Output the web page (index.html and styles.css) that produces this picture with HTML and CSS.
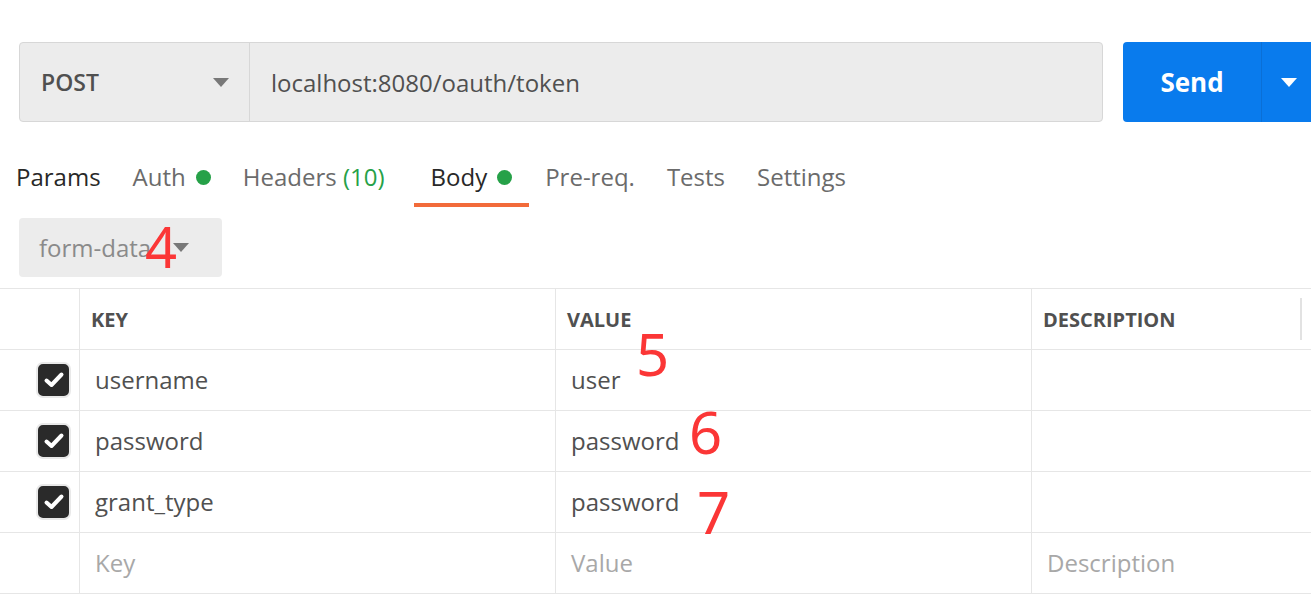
FILE: index.html
```html
<!DOCTYPE html>
<html lang="en">
<head>
<meta charset="utf-8">
<title>POST localhost:8080/oauth/token</title>
<link rel="stylesheet" href="styles.css">
</head>
<body>
<div class="page">
  <div class="request-bar">
    <div class="url-group">
      <div class="method">
        <span class="method-name">POST</span>
        <span class="caret caret-grey"></span>
      </div>
      <div class="url">localhost:8080/oauth/token</div>
    </div>
    <div class="send">
      <span class="send-label">Send</span>
      <span class="send-more"><span class="caret caret-white"></span></span>
    </div>
  </div>

  <nav class="tabs">
    <span class="tab tab-dark">Params</span>
    <span class="tab">Auth<span class="dot"></span></span>
    <span class="tab tab-headers">Headers <span class="count">(10)</span></span>
    <span class="tab tab-dark active">Body<span class="dot"></span></span>
    <span class="tab">Pre-req.</span>
    <span class="tab">Tests</span>
    <span class="tab">Settings</span>
  </nav>

  <div class="body-type">
    <div class="select">
      <span class="select-label">form-data</span>
      <span class="caret caret-grey"></span>
    </div>
  </div>

  <div class="kv">
    <div class="cell cell-check head"></div>
    <div class="cell head">KEY</div>
    <div class="cell head">VALUE</div>
    <div class="cell head head-last">DESCRIPTION<span class="resizer"></span></div>

    <div class="cell cell-check"><span class="checkbox"><svg viewBox="0 0 24 24" width="24" height="24"><path d="M4.5 12.5 L9.5 17 L19.5 6.5" fill="none" stroke="#fff" stroke-width="4" stroke-linecap="round" stroke-linejoin="round"/></svg></span></div>
    <div class="cell">username</div>
    <div class="cell">user</div>
    <div class="cell"></div>

    <div class="cell cell-check"><span class="checkbox"><svg viewBox="0 0 24 24" width="24" height="24"><path d="M4.5 12.5 L9.5 17 L19.5 6.5" fill="none" stroke="#fff" stroke-width="4" stroke-linecap="round" stroke-linejoin="round"/></svg></span></div>
    <div class="cell">password</div>
    <div class="cell">password</div>
    <div class="cell"></div>

    <div class="cell cell-check"><span class="checkbox"><svg viewBox="0 0 24 24" width="24" height="24"><path d="M4.5 12.5 L9.5 17 L19.5 6.5" fill="none" stroke="#fff" stroke-width="4" stroke-linecap="round" stroke-linejoin="round"/></svg></span></div>
    <div class="cell">grant_type</div>
    <div class="cell">password</div>
    <div class="cell"></div>

    <div class="cell cell-check"></div>
    <div class="cell placeholder">Key</div>
    <div class="cell placeholder">Value</div>
    <div class="cell placeholder">Description</div>
  </div>

  <span class="mark mark-4">4</span>
  <span class="mark mark-5">5</span>
  <span class="mark mark-6">6</span>
  <span class="mark mark-7">7</span>
</div>
</body>
</html>
```

FILE: styles.css
```css
* { box-sizing: border-box; }

html, body {
  margin: 0;
  padding: 0;
  background: #ffffff;
}

body {
  font-family: "Open Sans", "Noto Sans", sans-serif;
  color: #505050;
  overflow: hidden;
}

.page {
  position: relative;
  width: 1311px;
  height: 601px;
  overflow: hidden;
}

/* ---------- request bar ---------- */
.request-bar {
  display: flex;
  padding: 42px 0 0 19px;
  height: 122px;
}

.url-group {
  display: flex;
  flex-shrink: 0;
  width: 1084px;
  height: 80px;
  background: #ececec;
  border: 1px solid #d7d7d7;
  border-radius: 4px;
}

.method {
  display: flex;
  align-items: center;
  justify-content: space-between;
  width: 230px;
  padding: 0 20px 0 21px;
  border-right: 1px solid #d7d7d7;
}

.method-name {
  font-size: 23px;
  font-weight: 600;
  color: #505050;
}

.url {
  display: flex;
  align-items: center;
  padding-left: 21px;
  font-size: 24px;
  color: #505050;
}

.caret {
  display: inline-block;
  width: 0;
  height: 0;
  border-left: 8px solid transparent;
  border-right: 8px solid transparent;
}
.caret-grey { border-top: 9px solid #787878; }
.caret-white { border-top: 9px solid #ffffff; }

.send {
  display: flex;
  flex-shrink: 0;
  margin-left: 20px;
  height: 80px;
  background: #097bed;
  border-radius: 4px 0 0 4px;
  color: #ffffff;
}

.send-label {
  display: flex;
  align-items: center;
  justify-content: center;
  width: 139px;
  font-size: 26px;
  font-weight: 700;
  border-right: 1px solid #0a6fd6;
}

.send-more {
  display: flex;
  align-items: center;
  padding-left: 19px;
  width: 60px;
}

/* ---------- tabs ---------- */
.tabs {
  display: flex;
  margin-top: 39px;
}

.tab {
  display: flex;
  align-items: center;
  height: 46px;
  padding: 0 16px 10px;
  font-size: 24px;
  line-height: 32px;
  color: #6b6b6b;
  border-bottom: 4px solid transparent;
  white-space: pre;
}

.tab-dark { color: #282828; }

.tab-headers { padding-right: 29px; }

.tab.active {
  border-bottom-color: #f26b3a;
  padding-left: 17px;
  padding-right: 17px;
}

.dot {
  display: inline-block;
  width: 15px;
  height: 15px;
  margin-left: 10px;
  border-radius: 50%;
  background: #26a148;
}

.count { color: #26a148; }

/* ---------- body type select ---------- */
.body-type {
  padding: 11px 0 11px 19px;
}

.select {
  display: flex;
  align-items: center;
  width: 203px;
  height: 59px;
  padding: 0 0 0 20px;
  background: #ececec;
  border-radius: 4px;
}

.select-label {
  font-size: 24px;
  color: #8a8a8a;
  margin-right: 22px;
}

/* ---------- key / value table ---------- */
.kv {
  display: grid;
  grid-template-columns: 80px 476px 476px 1fr;
  grid-auto-rows: 61px;
  border-top: 1px solid #e6e6e6;
}

.cell {
  display: flex;
  align-items: center;
  padding-left: 15px;
  padding-bottom: 2px;
  font-size: 24px;
  color: #505050;
  border-bottom: 1px solid #e6e6e6;
  border-right: 1px solid #e6e6e6;
}

.cell:nth-child(4n) { border-right: none; }

.cell-check {
  justify-content: flex-end;
  padding: 0 8px 0 0;
}

.head {
  padding-left: 11px;
  padding-bottom: 0;
  font-size: 20px;
  font-weight: 700;
  color: #505050;
}

.head.cell-check { padding: 0; }

.head-last {
  justify-content: space-between;
  padding-right: 9px;
}

.resizer {
  width: 2px;
  height: 42px;
  background: #e2e2e2;
}

.placeholder { color: #a8a8a8; }

.checkbox {
  display: flex;
  align-items: center;
  justify-content: center;
  width: 35px;
  height: 36px;
  background: #2a2a2a;
  border: 2px solid #e9e9e9;
  border-radius: 7px;
}

/* ---------- red annotations ---------- */
.mark {
  position: absolute;
  font-family: "Noto Sans", "Open Sans", sans-serif;
  font-weight: 400;
  line-height: 1;
  color: #fb3636;
}

.mark-4 { left: 145px; top: 218px; font-size: 56px; }
.mark-5 { left: 636px; top: 325px; font-size: 58px; }
.mark-6 { left: 689px; top: 403px; font-size: 58px; }
.mark-7 { left: 697px; top: 483px; font-size: 58px; }
```
